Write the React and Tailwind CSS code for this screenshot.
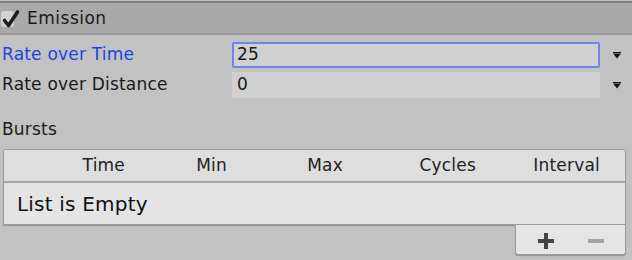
import React from "react";

function Check() {
  return (
    <div className="relative w-[20px] h-[24px] ml-[1px]">
      <div className="absolute left-0 top-[5px] w-[13px] h-[16px] rounded-[3px] bg-[#d2d2d2]" />
      <svg className="absolute left-0 top-0" width="20" height="24" viewBox="0 0 20 24">
        <path d="M3.5 14.5 L7.5 19.5 L16.5 6" fill="none" stroke="#1e1e1e" strokeWidth="3.6" strokeLinecap="round" strokeLinejoin="round" />
      </svg>
    </div>
  );
}

function Arrow() {
  return (
    <svg width="8" height="7" viewBox="0 0 8 7" className="ml-[13px]">
      <rect x="0" y="0" width="8" height="1.5" fill="#111" />
      <path d="M0.5 2 L7.5 2 L4 6.5 Z" fill="#111" />
    </svg>
  );
}

export default function App() {
  return (
    <div className="w-[632px] h-[260px] bg-[#c2c2c2] overflow-hidden font-['DejaVu_Sans',sans-serif] text-[17px] tracking-[0.2px] text-[#1a1a1a]">
      <div className="mt-px h-[34px] bg-[#a9a9a9] border-t-2 border-b-2 border-t-[#808080] border-b-[#979797] flex items-center">
        <Check />
        <span className="ml-[6px] leading-none tracking-[0.5px]">Emission</span>
      </div>

      <div className="mt-[7px] flex items-center h-[26px]">
        <div className="w-[232px] pl-[2px] text-[#1c45e0]">Rate over Time</div>
        <div className="w-[368px] h-[26px] bg-[#d0d0d0] border-2 border-[#6f84e8] rounded-[2px] flex items-center pl-[3px]">25</div>
        <Arrow />
      </div>
      <div className="mt-[4px] flex items-center h-[26px]">
        <div className="w-[232px] pl-[2px]">Rate over Distance</div>
        <div className="w-[368px] h-[26px] bg-[#d0d0d0] flex items-center pl-[5px]">0</div>
        <Arrow />
      </div>

      <div className="mt-[20px] pl-[2px] leading-[22px]">Bursts</div>

      <div className="mt-[9px] ml-[3px] w-[623px]">
        <div className="border border-[#9c9c9c] rounded-t-[3px] bg-[#e4e4e4] shadow-[0_1px_1px_rgba(0,0,0,0.25)]">
          <div className="h-[33px] bg-[#dedede] border-b-2 border-[#a3a3a3] flex items-center text-[#222] rounded-t-[3px]">
            <div className="w-[121px] text-right">Time</div>
            <div className="w-[102px] text-right">Min</div>
            <div className="w-[116px] text-right">Max</div>
            <div className="w-[133px] text-right">Cycles</div>
            <div className="w-[124px] text-right">Interval</div>
          </div>
          <div className="h-[41px] flex items-center pl-[13px] text-[20px] text-[#111]">List is Empty</div>
        </div>
        <div className="flex justify-end">
          <div className="w-[111px] h-[30px] bg-[#e5e5e5] border border-t-0 border-[#9c9c9c] rounded-b-[3px] shadow-[0_1px_1px_rgba(0,0,0,0.25)] flex items-center">
            <svg width="16" height="16" viewBox="0 0 16 16" className="ml-[22px] mt-[2px]">
              <rect x="6" y="0" width="4" height="16" fill="#444" />
              <rect x="0" y="6" width="16" height="4" fill="#444" />
            </svg>
            <div className="ml-[34px] mt-[2px] w-[16px] h-[4px] bg-[#a3a3a3]" />
          </div>
        </div>
      </div>
    </div>
  );
}
